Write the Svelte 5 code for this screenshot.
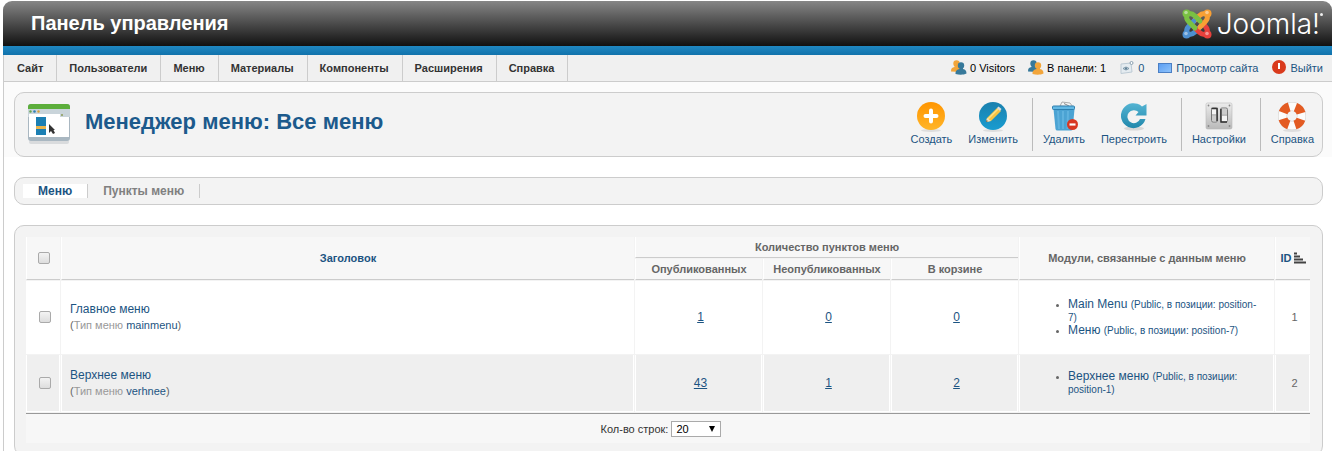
<script>
  const menu = ['Сайт', 'Пользователи', 'Меню', 'Материалы', 'Компоненты', 'Расширения', 'Справка'];
  const rows = [
    { title: 'Главное меню', type: 'mainmenu', counts: [1, 0, 0], id: 1,
      modules: [['Main Menu', '(Public, в позиции: position-7)'], ['Меню', '(Public, в позиции: position-7)']] },
    { title: 'Верхнее меню', type: 'verhnee', counts: [43, 1, 2], id: 2,
      modules: [['Верхнее меню', '(Public, в позиции: position-1)']] }
  ];
</script>

{#snippet people(front, back)}
  <svg width="16" height="16" viewBox="0 0 16 16" aria-hidden="true">
    <circle cx="5.500" cy="3.500" r="3.200" fill={back} />
    <path d="M0 11.500c0-3 1-4 3.500-4.500V5h4l2 3v4z" fill={back} />
    <circle cx="10" cy="5.500" r="3.200" fill={front} />
    <path d="M4.500 14c0-3.500 1.500-4.500 4-5V7h3.500v2c2.500.5 3.500 2 3.500 4.500-3 1.500-7 1.500-11 .5z" fill={front} />
  </svg>
{/snippet}

<div class="page">
  <header class="top">
    <h1>Панель управления</h1>
    <div class="brand">
      <svg width="30" height="30" viewBox="0 0 30 30" aria-hidden="true">
        <g fill="none" stroke-width="5" stroke-linecap="round" stroke-linejoin="round">
          <path d="M25 5c-3-1-6 0-8 2l-5 5" stroke="#f9a034" />
          <path d="M5 25c-1-3 0-6 2-8l5-5" stroke="#4d8fd0" />
          <path d="M25 25c1-3 0-6-2-8l-5-5" stroke="#e8403c" />
          <path d="M5 25c3 1 6 0 8-2l7-7" stroke="#4d8fd0" />
          <path d="M25 25c-3 1-6 0-8-2l-5-5" stroke="#e8403c" />
          <path d="M25 5c1 3 0 6-2 8l-5 5" stroke="#f9a034" />
          <path d="M5 5c-1 3 0 6 2 8l6 6M5 5c3-1 6 0 8 2l5 5" stroke="#7ac143" />
        </g>
        <circle cx="4.500" cy="4.500" r="4" fill="#7ac143" />
        <circle cx="25.500" cy="4.500" r="4" fill="#f9a034" />
        <circle cx="4.500" cy="25.500" r="4" fill="#4d8fd0" />
        <circle cx="25.500" cy="25.500" r="4" fill="#e8403c" />
        <g fill="#fff" opacity=".45"><circle cx="4" cy="3.500" r="1.800" /><circle cx="25" cy="3.500" r="1.800" /><circle cx="4" cy="24.500" r="1.800" /><circle cx="25" cy="24.500" r="1.800" /></g>
      </svg>
      <span class="word">Joomla!</span><span class="dot"></span>
    </div>
  </header>
  <div class="stripe"></div>

  <div class="bar">
    <nav class="menu">
      {#each menu as item}<a href="#top">{item}</a>{/each}
    </nav>
    <div class="status">
      <span>{@render people('#37799a', '#f2a53a')}0 Visitors</span>
      <span>{@render people('#f2a53a', '#37799a')}В панели: 1</span>
      <a href="#messages">
        <svg width="16" height="16" viewBox="0 0 16 16" aria-hidden="true">
          <path d="M2 4l10-1 1 9-11 1.500z" fill="#e4ebf0" stroke="#bdcbd5" />
          <path d="M4 8.500q3-3 6 0q-3 3-6 0z" fill="none" stroke="#7a96a8" />
          <circle cx="7" cy="8.500" r="1" fill="#54768c" />
          <circle cx="12.500" cy="3" r="1.500" fill="#fff" stroke="#8aa0b0" />
        </svg>0</a>
      <a href="#site">
        <svg width="16" height="16" viewBox="0 0 16 16" aria-hidden="true">
          <defs><linearGradient id="screen" x2="1" y2="1"><stop stop-color="#5a9df2" /><stop offset="1" stop-color="#8fc4fb" /></linearGradient></defs>
          <rect x="1.500" y="3.500" width="13" height="9" fill="url(#screen)" stroke="#4b7fc4" />
        </svg>Просмотр сайта</a>
      <a href="#logout">
        <svg width="16" height="16" viewBox="0 0 16 16" aria-hidden="true">
          <circle cx="8" cy="7" r="7" fill="#d93a1c" /><path d="M8 3v6" stroke="#fff" stroke-width="2" />
        </svg>Выйти</a>
    </div>
  </div>

  <div class="lead">
    <section class="box toolbar">
      <svg class="pageicon" width="44" height="44" viewBox="0 0 44 44" aria-hidden="true">
        <rect x="2" y="37" width="40" height="4" rx="2" fill="#d9dbdd" />
        <rect x="1" y="1" width="42" height="37" rx="3" fill="#a9b7c1" />
        <path d="M1 6V4q0-3 3-3h36q3 0 3 3v2z" fill="#5cae3b" />
        <path d="M1 6h42v8H1z" fill="#c9d4da" />
        <path d="M2 11h31v3H2z" fill="#fff" />
        <rect x="2" y="14" width="40" height="20" fill="#fff" />
        <circle cx="3.500" cy="8.500" r="1.200" fill="#6aa84f" /><circle cx="7.500" cy="8.500" r="1.300" fill="#2f7fb5" /><circle cx="11.500" cy="8.500" r="1.200" fill="#d7a13c" /><circle cx="35" cy="12" r="1" fill="#8c9c57" />
        <rect x="9" y="14" width="10" height="18" fill="#1b7fb3" /><rect x="9" y="23" width="10" height="3" fill="#e9b44c" />
        <path d="M22 21v9l2-2 2 3 2-1-1.500-3H28z" fill="#333" />
      </svg>
      <h2>Менеджер меню: Все меню</h2>
      <div class="tools">
        <button>
          <svg width="32" height="32" viewBox="0 0 32 32" aria-hidden="true">
            <defs><linearGradient id="orange" x2="0" y2="1"><stop stop-color="#ff9500" /><stop offset="1" stop-color="#ffb52a" /></linearGradient></defs>
            <ellipse cx="16" cy="29.500" rx="10" ry="1.500" fill="#ddd" />
            <circle cx="16" cy="15" r="14" fill="url(#orange)" /><path d="M16 9.500v11M10.500 15h11" stroke="#fff" stroke-width="4" stroke-linecap="round" />
          </svg>Создать</button>
        <button>
          <svg width="32" height="32" viewBox="0 0 32 32" aria-hidden="true">
            <defs><linearGradient id="blue" x2="0" y2="1"><stop stop-color="#1a80ae" /><stop offset="1" stop-color="#199cd0" /></linearGradient></defs>
            <ellipse cx="16" cy="29.500" rx="10" ry="1.500" fill="#ddd" />
            <circle cx="16" cy="15" r="14" fill="url(#blue)" />
            <path d="M9 21l1-4L20 7l4 3-10 10z" fill="#f5c443" /><path d="M11 18L21.500 7.500" stroke="#fbe08a" stroke-width="1.500" /><path d="M9 21l1-4 4 3z" fill="#f6e2c2" /><path d="M9 21l.5-1.800L11 20z" fill="#333" /><path d="M20 7l1.500-1.500 3 2.500L23 10z" fill="#ddd" />
          </svg>Изменить</button>
        <i></i>
        <button>
          <svg width="32" height="32" viewBox="0 0 32 32" aria-hidden="true">
            <path d="M12 5l2-4 8 1 3 4z" fill="#f6f6f6" stroke="#999" stroke-width=".8" /><path d="M16 2.500l5 2.500" stroke="#888" />
            <path d="M5.500 8h21l-1.800 20q-.2 1.500-2 1.500H9.500Q7.700 29.500 7.500 28z" fill="#4ba3d3" />
            <path d="M10 10l1 18M15 10v18M20 10l-.5 18" stroke="#5fb2de" stroke-width="2" />
            <rect x="4.500" y="5" width="22" height="3.500" rx="1" fill="#62b8e4" stroke="#2e7fae" />
            <circle cx="24.500" cy="23.500" r="5.500" fill="#d83722" /><path d="M21.500 23.500h6" stroke="#fff" stroke-width="2.200" />
          </svg>Удалить</button>
        <button>
          <svg width="32" height="32" viewBox="0 0 32 32" aria-hidden="true">
            <defs><linearGradient id="teal" x2="0" y2="1"><stop stop-color="#54b4d3" /><stop offset="1" stop-color="#2188ac" /></linearGradient></defs>
            <ellipse cx="16" cy="27.500" rx="10" ry="2" fill="#d8d8d8" />
            <path d="M24 5.500L28.500 3v11.500H17.500l3-3.500a6.500 6.500 0 1 0 1.500 7h5.500A12.500 12.500 0 1 1 24 5.500z" fill="url(#teal)" />
          </svg>Перестроить</button>
        <i></i>
        <button>
          <svg width="32" height="32" viewBox="0 0 32 32" aria-hidden="true">
            <defs><linearGradient id="steel" x2="0" y2="1"><stop stop-color="#ececec" /><stop offset="1" stop-color="#b9b9b9" /></linearGradient></defs>
            <rect x="3" y="2" width="26" height="26" rx="1.500" fill="url(#steel)" stroke="#bbb" stroke-width=".6" />
            <g fill="#f5f5f5" stroke="#777" stroke-width="1"><rect x="8.500" y="7" width="6" height="14" rx="1.500" /><rect x="17.500" y="7" width="7" height="14" rx="1.500" /></g>
            <path d="M8.500 7.500h5.500V20M18 8v13h6" fill="none" stroke="#333" stroke-width="1.500" /><path d="M9 15h4v5H9zM19 8h5v5h-5z" fill="#ccc" /><path d="M9 14h4M19 14h5" stroke="#888" />
            <g fill="#888"><circle cx="5.500" cy="4.500" r=".9" /><circle cx="26.500" cy="4.500" r=".9" /><circle cx="5.500" cy="25" r=".9" /><circle cx="26.500" cy="25" r=".9" /></g>
          </svg>Настройки</button>
        <i></i>
        <button>
          <svg width="32" height="32" viewBox="0 0 32 32" aria-hidden="true">
            <ellipse cx="16" cy="29.500" rx="9" ry="1.500" fill="#ddd" />
            <circle cx="16" cy="15" r="9.500" fill="none" stroke="#d3cfcc" stroke-width="9" />
            <circle cx="16" cy="15" r="9.500" fill="none" stroke="#fcfcfb" stroke-width="8" />
            <circle cx="16" cy="15" r="9.500" fill="none" stroke="#e35b22" stroke-width="9" stroke-dasharray="8.600 6.323" stroke-dashoffset="-3.200" />
          </svg>Справка</button>
      </div>
    </section>
  </div>

  <nav class="box sub">
    <a class="active" href="#menus">Меню</a><a href="#items">Пункты меню</a>
  </nav>

  <main class="box list">
    <table>
      <colgroup>
        <col class="c-check" /><col /><col class="c-num" /><col class="c-num" /><col class="c-num" /><col class="c-mod" /><col class="c-id" />
      </colgroup>
      <thead>
        <tr>
          <th rowspan="2"><input type="checkbox" aria-label="Все" /></th>
          <th rowspan="2"><a href="#title">Заголовок</a></th>
          <th colspan="3">Количество пунктов меню</th>
          <th rowspan="2">Модули, связанные с данным меню</th>
          <th rowspan="2"><a class="sort" href="#id">ID<svg width="12" height="12" viewBox="0 0 12 12" aria-hidden="true"><path d="M0 1.500h3M0 4.500h6M0 7.500h9M0 10.500h12" stroke="#444" stroke-width="2" /></svg></a></th>
        </tr>
        <tr><th>Опубликованных</th><th>Неопубликованных</th><th>В корзине</th></tr>
      </thead>
      <tbody>
        {#each rows as row}
          <tr>
            <td class="center"><input type="checkbox" aria-label={row.title} /></td>
            <td>
              <a href="#menu">{row.title}</a>
              <p>(<span>Тип меню</span> <a href="#type">{row.type}</a>)</p>
            </td>
            {#each row.counts as n}<td class="center"><a class="count" href="#count">{n}</a></td>{/each}
            <td>
              <ul>
                {#each row.modules as [name, place]}<li><a href="#module">{name} <small>{place}</small></a></li>{/each}
              </ul>
            </td>
            <td class="center">{row.id}</td>
          </tr>
        {/each}
      </tbody>
      <tfoot>
        <tr><td colspan="7"><label for="limit">Кол-во строк:</label> <span class="pick"><select id="limit"><option>20</option></select></span></td></tr>
      </tfoot>
    </table>
  </main>
</div>

<style>
  :global(body) { margin: 0; background: #fff; overflow: hidden; }
  .page { margin: 1px 0 0 3px; font: 11px/16px "Liberation Sans", Arial, sans-serif; color: #333; background: linear-gradient(#ccc, #ccc) 0 56px / 1px 100% no-repeat; }
  a { color: #1c5482; text-decoration: none; }
  .top { display: flex; align-items: center; justify-content: space-between; height: 45px; padding: 0 9px 0 28px; border-radius: 9px 9px 0 0; background: linear-gradient(#868686, #111); }
  h1 { margin: 0 0 2px; color: #fff; font-size: 20px; line-height: 24px; }
  .brand { display: flex; align-items: center; color: #fff; }
  .word { font: 300 28px/32px Inter, sans-serif; margin-left: 5px; }
  .dot { align-self: flex-start; width: 3px; height: 3px; margin-top: 5px; background: #eee; border-radius: 50%; }
  .stripe { height: 9px; background: linear-gradient(#1f88c2, #1172ab); }
  .bar { display: flex; justify-content: space-between; height: 26px; background: #f0f0f0; border-bottom: 1px solid #ccc; border-left: 1px solid #ccc; }
  .menu { display: flex; line-height: 27px; font-weight: bold; }
  .menu a { color: #333; padding: 0 13px 0 12px; border-right: 1px solid #ccc; }
  .menu a:first-child { padding-left: 13px; }
  .status { display: flex; gap: 13px; align-items: center; padding-right: 9px; color: #000; }
  .status span, .status a { display: flex; align-items: center; gap: 3px; }
  .lead { padding: 10px 9px 0 10px; background: #fbfbfb; border-left: 1px solid #ccc; }
  .box { background: #f3f3f3; border: 1px solid #ccc; border-radius: 10px; }
  .toolbar { display: flex; align-items: center; height: 63px; padding: 0 0 0 12px; }
  .pageicon { flex: none; }
  h2 { margin: 0 auto 6px 14px; font-size: 22px; line-height: 26px; color: #1c5a8c; }
  .tools { display: flex; align-items: center; }
  .tools i { width: 1px; height: 53px; margin: 0 2px 0 6px; background: #bbb; }
  button { display: flex; flex-direction: column; align-items: center; padding: 1px 8px 4px; border: 0; background: none; font: inherit; line-height: 12px; color: #1c5482; }
  .page > .box { margin: 20px 9px 0 11px; }
  .sub { display: flex; align-items: center; height: 26px; padding-left: 8px; font-size: 12px; font-weight: bold; }
  .sub a { padding: 0 15px; line-height: 14px; color: #808080; border-right: 1px solid #ccc; }
  .sub .active { background: #fff; color: #1c5482; }
  .list { padding: 10px 11px 11px 10px; }
  table { width: 100%; table-layout: fixed; border-spacing: 1px; background: #f3f3f3; color: #666; }
  .c-check { width: 34px; }
  .c-num { width: 127px; }
  .c-mod { width: 255px; }
  .c-id { width: 35px; }
  th { height: 20px; padding: 0; background: #f7f7f7; border-bottom: 1px solid #ccc; border-left: 1px solid #fff; line-height: 20px; }
  td { padding: 3px 8px; background: #fff; border: 1px solid #fff; border-top: 0; }
  tbody tr:first-child td { height: 66px; }
  tbody tr:last-child td { height: 50px; background: #efefef; }
  tbody td.center { text-align: center; padding: 3px 0 3px 4px; }
  tbody td > a { font-size: 12px; }
  p { margin: 0; }
  p span { color: #999; }
  .count { text-decoration: underline; }
  input { display: block; width: 12px; height: 12px; margin: 0 auto; appearance: none; border: 1px solid #aaa; border-radius: 2px; background: linear-gradient(#f3f3f3, #ddd); }
  ul { margin: 0; padding: 0 8px 0 40px; line-height: 13px; font-size: 12px; }
  li::marker { font-size: 9px; }
  small { font-size: 10px; }
  .sort { display: flex; align-items: center; justify-content: center; gap: 2px; }
  tfoot td { height: 23px; padding-right: 22px; background: #f7f7f7; border: 0; border-top: 1px solid #999; text-align: center; color: #333; }
  select { width: 50px; height: 16px; padding: 0 4px; appearance: none; border: 1px solid #aaa; border-radius: 0; background: #fff; font: inherit; line-height: 14px; color: #000; }
  .pick { display: inline-grid; align-items: center; }
  .pick > select, .pick::after { grid-area: 1 / 1; }
  .pick::after { content: ""; justify-self: end; margin-right: 6px; border: 3px solid transparent; border-top: 6px solid #000; border-bottom: 0; pointer-events: none; }
</style>
